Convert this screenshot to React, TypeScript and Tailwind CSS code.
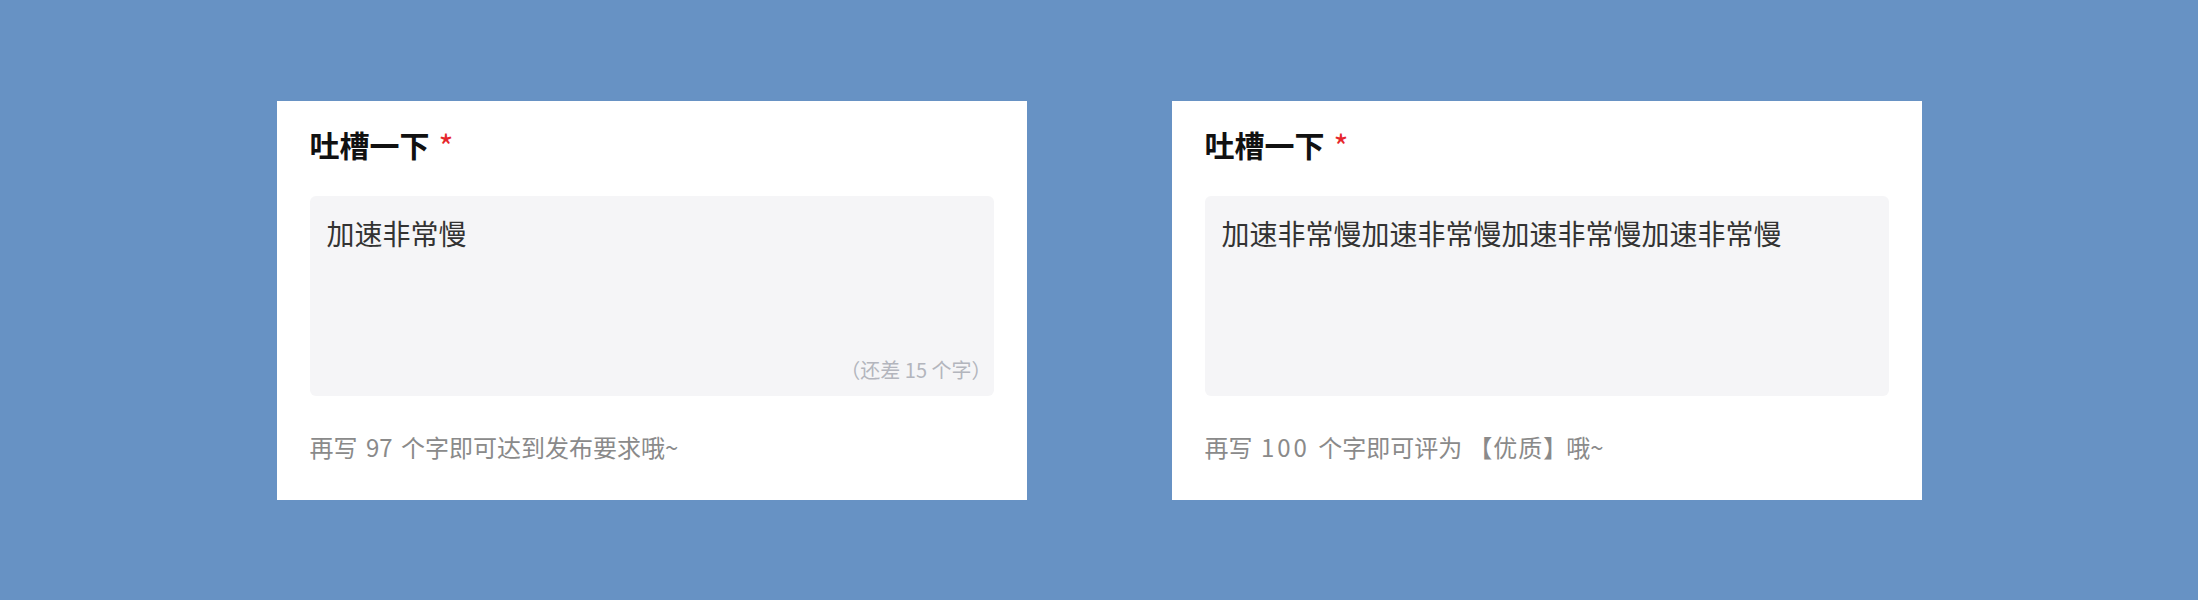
import { type ReactNode } from 'react';

const font = { fontFamily: '"Noto Sans CJK SC", "Noto Sans", sans-serif' };

type CardProps = {
  text: string
  counter?: string
  hint: ReactNode
}

const FeedbackCard = ({ text, counter, hint }: CardProps) => {
  return (
    <div className="w-[750px] h-[399px] bg-white px-[33px] pt-[24px] flex flex-col">
      <div className="flex items-center h-[40px] text-[30px] font-bold text-[#111]">
        吐槽一下
        <span className="ml-[9px] text-[32px] font-normal text-[#e6262c]">*</span>
      </div>
      <div className="relative mt-[31px] h-[200px] rounded-[6px] bg-[#f5f5f7] px-[17px] pt-[17px]">
        <p className="text-[28px] leading-[40px] text-[#333]">{text}</p>
        {counter && (
          <span className="absolute right-[2px] bottom-[14px] text-[20px] leading-[24px] text-[#b3b5bd]">
            {counter}
          </span>
        )}
      </div>
      <p className="mt-[35px] text-[24px] leading-[32px] [word-spacing:3px] text-[#8a8a8a]">{hint}</p>
    </div>
  );
};

export default function App() {
  return (
    <div style={font} className="w-[2198px] h-[600px] bg-[#6792c4] flex items-center justify-center gap-[145px]">
      <FeedbackCard text="加速非常慢" counter="（还差 15 个字）" hint="再写 97 个字即可达到发布要求哦~" />
      <FeedbackCard
        text="加速非常慢加速非常慢加速非常慢加速非常慢"
        hint={
          <>
            再写 <span className="tracking-[3px]">100</span> 个字即可评为
            <span className="ml-[6px] mr-[-2px] tracking-[1px]">【优质】</span>哦~
          </>
        }
      />
    </div>
  );
}
